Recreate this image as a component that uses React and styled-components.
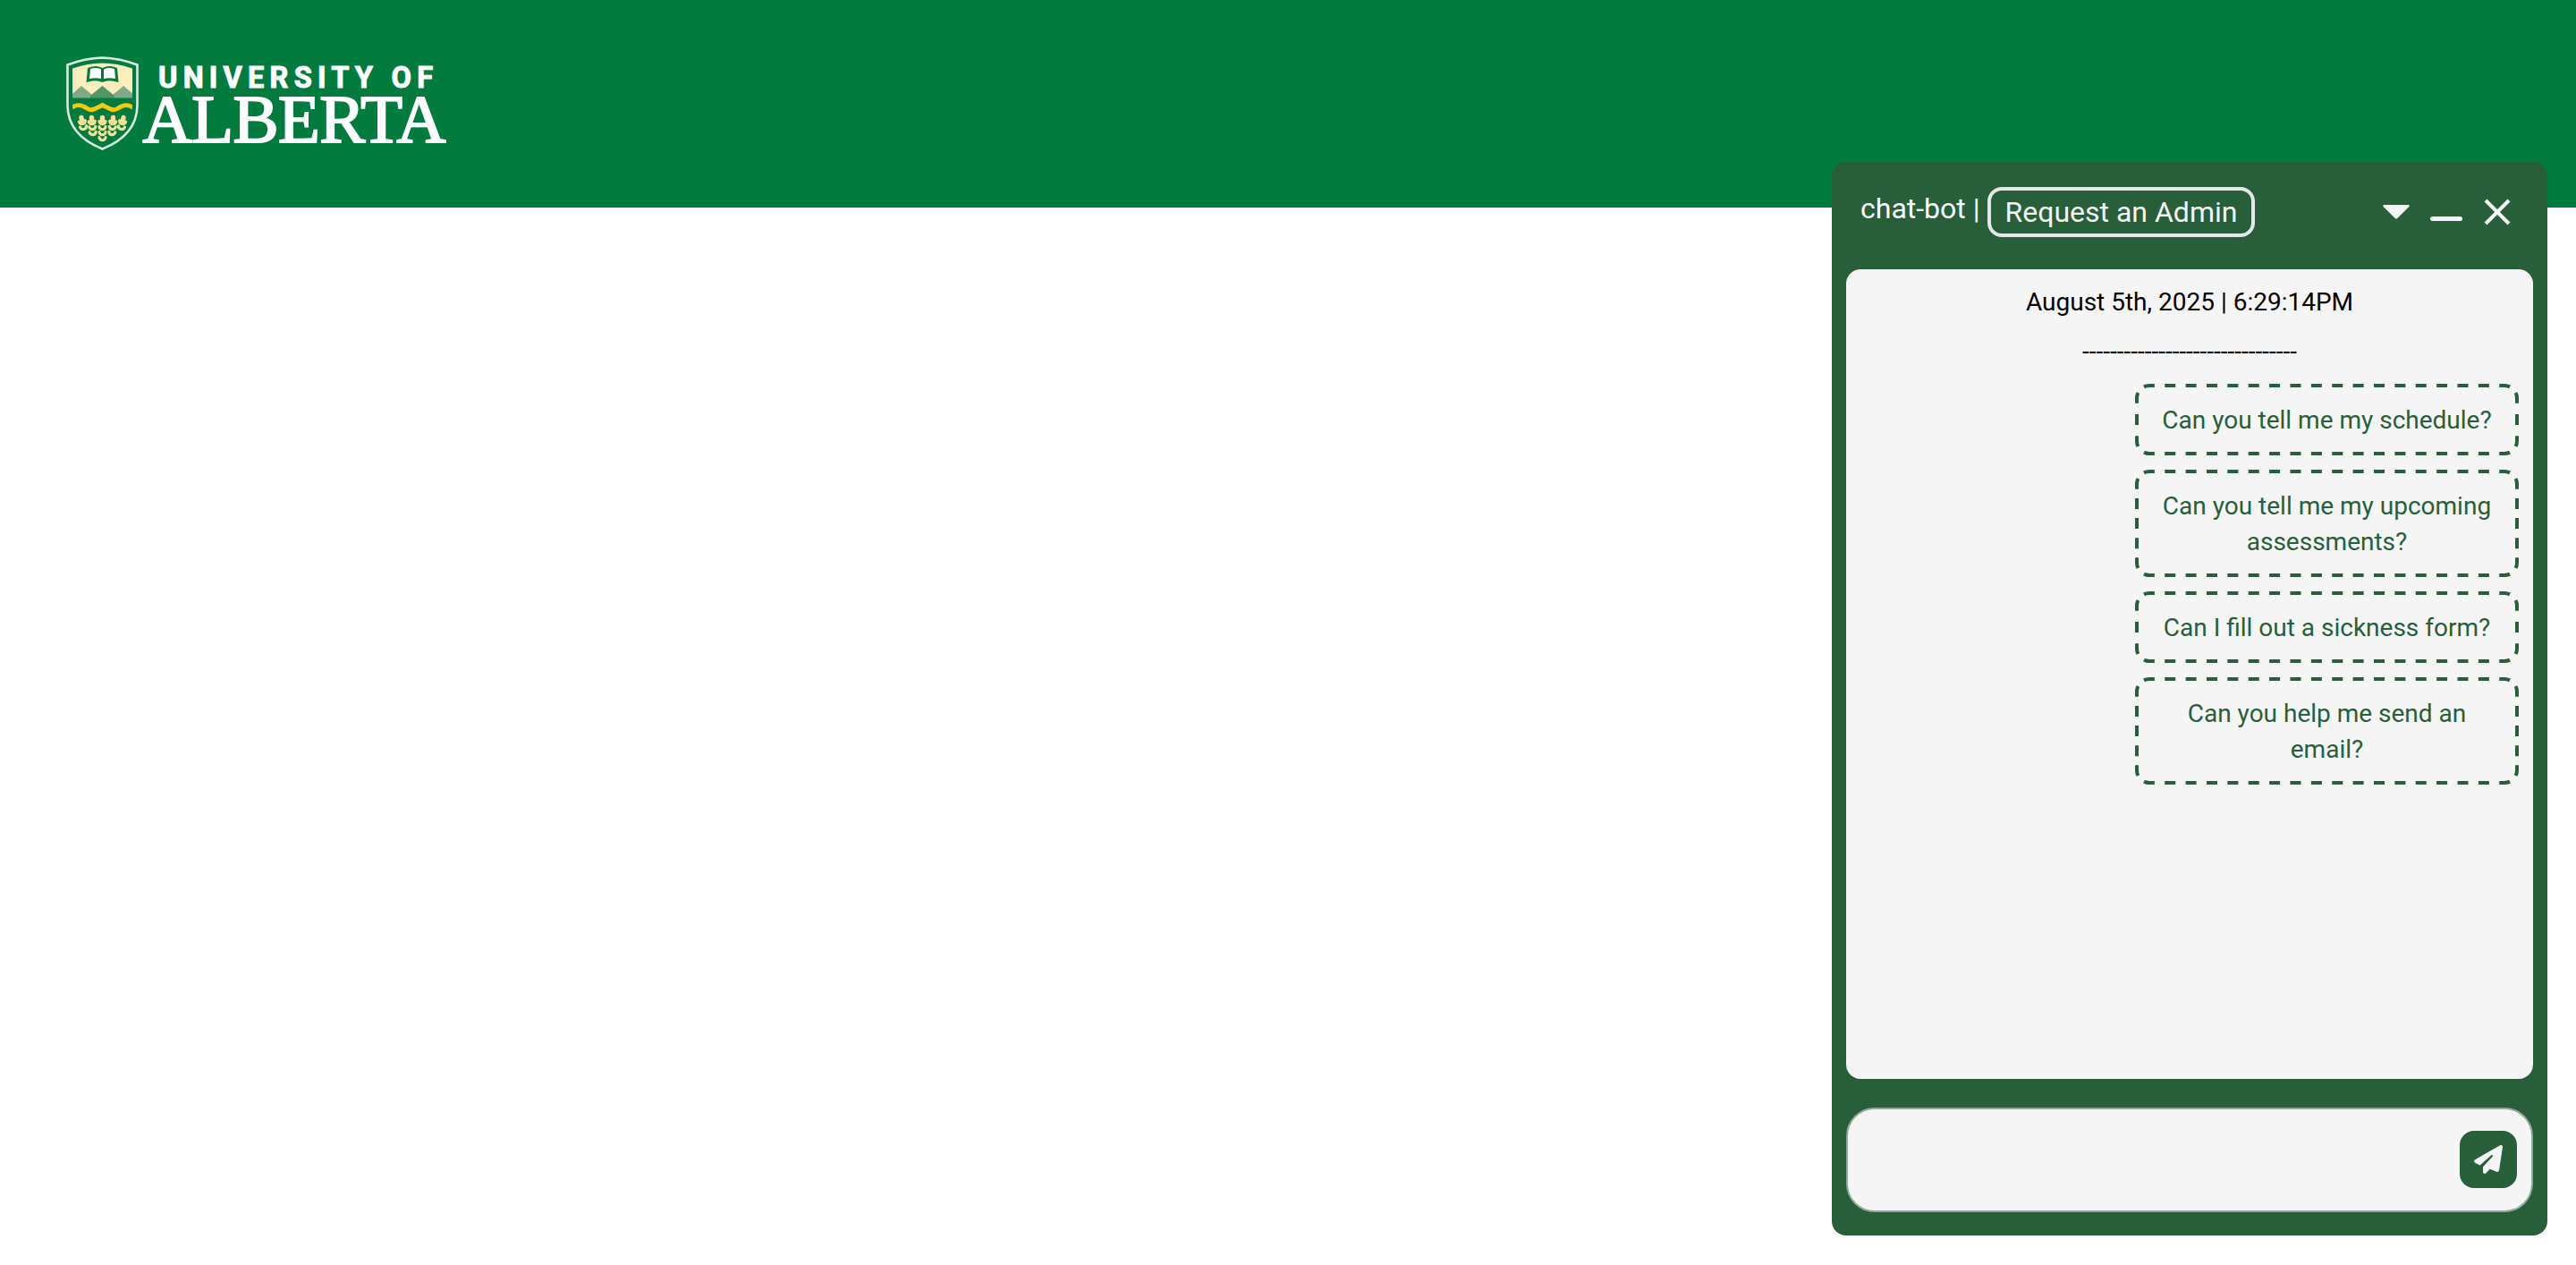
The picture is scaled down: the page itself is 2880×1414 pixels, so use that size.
import React from "react";
import styled, { createGlobalStyle } from "styled-components";
import { FaPaperPlane } from "react-icons/fa6";

const GlobalStyle = createGlobalStyle`
  *, *::before, *::after { box-sizing: border-box; }
  body {
    margin: 0;
    background: #fff;
    font-family: Roboto, "Liberation Sans", sans-serif;
  }
  button, input { font: inherit; margin: 0; }
`;

const Page = styled.div`
  height: 1414px;
  overflow: hidden;
`;

const Banner = styled.header`
  display: flex;
  align-items: center;
  height: 232px;
  padding: 0 64px;
  background: #037b3f;
`;

const LogoSvg = styled.svg`
  overflow: visible;
`;

const ChatWindow = styled.section`
  position: fixed;
  right: 32px;
  bottom: 33px;
  display: flex;
  flex-direction: column;
  width: 800px;
  height: 1200px;
  padding: 0 16px 26px;
  border-radius: 16px;
  background: #285e39;
`;

const ChatHeader = styled.div`
  display: flex;
  align-items: flex-start;
  justify-content: space-between;
  height: 120px;
  padding: 28px 8px 0 16px;
`;

const TitleGroup = styled.div`
  display: flex;
  align-items: flex-start;
  gap: 8px;
  font-size: 32px;
  line-height: 48px;
  color: #fff;
`;

const AdminButton = styled.button`
  height: 56px;
  padding: 0 16px;
  border: 4px solid #e5e7eb;
  border-radius: 16px;
  background: transparent;
  color: #f5f5f5;
  line-height: 48px;
`;

const Controls = styled.div`
  display: flex;
  height: 56px;
`;

const IconButton = styled.button`
  display: flex;
  align-items: center;
  justify-content: center;
  width: ${(p) => p.$width}px;
  height: 56px;
  padding: 0;
  border: 0;
  border-radius: 16px;
  background: transparent;
  color: #f5f5f5;
`;

const Messages = styled.div`
  display: flex;
  flex-direction: column;
  align-items: center;
  gap: 16px;
  height: 905px;
  padding: 16px;
  border-radius: 16px;
  background: #f5f5f5;
  font-size: 28px;
  line-height: 40px;
  color: #000;
`;

const Stamp = styled.div`
  height: 40px;
  padding-top: 1px;
  text-align: center;
`;

const Divider = styled.div`
  height: 40px;
  text-align: center;
`;

const Suggestion = styled.button`
  position: relative;
  align-self: flex-end;
  width: 429px;
  padding: 21px 28px 19px;
  border: 0;
  border-radius: 16px;
  background: transparent;
  color: #285e39;
  line-height: 40px;
  text-align: center;
`;

const Outline = styled.svg`
  position: absolute;
  inset: 0;
  fill: none;
  stroke: #285e39;
  stroke-width: 4px;
`;

const Composer = styled.form`
  display: flex;
  align-items: center;
  height: 117px;
  margin-top: 32px;
  padding: 0 16px 1px;
  border: 2px solid #91ab9b;
  border-radius: 32px;
  background: #f5f5f5;
`;

const MessageInput = styled.input`
  flex: 1;
  height: 64px;
  padding: 0 16px;
  border: 0;
  outline: 0;
  background: transparent;
  font-size: 28px;
`;

const SendButton = styled.button`
  display: flex;
  align-items: center;
  justify-content: center;
  width: 64px;
  height: 64px;
  padding: 0;
  border: 0;
  border-radius: 16px;
  background: #285e39;
  color: #f5f5f5;
`;

const suggestions = [
  { text: "Can you tell me my schedule?", lines: 1 },
  { text: "Can you tell me my upcoming assessments?", lines: 2 },
  { text: "Can I fill out a sickness form?", lines: 1 },
  { text: "Can you help me send an email?", lines: 2 },
];

const SHIELD = "M75.5 72.5 Q95 65 114.5 64.5 Q134 65 153.5 72.5 V118 Q153 151 114.5 166.5 Q76 151 75.5 118 Z";
const FIELD = "M81 76.500 Q98 70.500 114.500 70.500 Q131 70.500 148 76.500 V118 Q147 147 114.500 160.500 Q82 147 81 118 Z";

/* Each side carries a whole number of 12px dashes, ending on the corner curves. */
function DashedOutline({ width, height }) {
  const dashes = (side) => {
    const length = side - 19.6;
    const count = Math.round((length - 12) / 23.4);
    return `12 ${(length - 12) / count - 12}`;
  };
  const r = width;
  const b = height;
  const horizontal = dashes(width);
  const vertical = dashes(height);
  return (
    <Outline width={width} height={height} aria-hidden="true">
      <path strokeDasharray={horizontal} d={`M10 3.35A14 14 0 0 1 16 2H${r - 16}A14 14 0 0 1 ${r - 10} 3.35`} />
      <path strokeDasharray={horizontal} d={`M10 ${b - 3.35}A14 14 0 0 0 16 ${b - 2}H${r - 16}A14 14 0 0 0 ${r - 10} ${b - 3.35}`} />
      <path strokeDasharray={vertical} d={`M3.35 10A14 14 0 0 0 2 16V${b - 16}A14 14 0 0 0 3.35 ${b - 10}`} />
      <path strokeDasharray={vertical} d={`M${r - 3.35} 10A14 14 0 0 1 ${r - 2} 16V${b - 16}A14 14 0 0 1 ${r - 3.35} ${b - 10}`} />
    </Outline>
  );
}

function Ear({ x, y = 131.5, rows, lean = 0 }) {
  return (
    <g stroke="#f6e093" fill="none" strokeLinecap="round" transform={`rotate(${lean} ${x} ${y})`}>
      <path d={`M${x} ${y}v3`} strokeWidth="5.400" />
      {Array.from({ length: rows }, (_, i) => (
        <path
          key={i}
          d={`M${x - 3.6} ${y + 4 + i * 6}q.6 3.200 3.600 3.200q3 0 3.600 -3.200`}
          strokeWidth="3.100"
        />
      ))}
    </g>
  );
}

function Logo() {
  return (
    <LogoSvg width="440" height="116" viewBox="64 58 440 116" role="img" aria-label="University of Alberta">
      <defs>
        <clipPath id="field"><path d={FIELD} /></clipPath>
      </defs>
      <path d={SHIELD} fill="#037b3f" stroke="#d6eee0" strokeWidth="2.600" />
      <g clipPath="url(#field)">
        <rect x="80" y="68" width="70" height="38" fill="#fcedbd" />
        <path d="M80 106 L91 96 L103 106 L114.500 96 L126 106 L138 96 L150 106 V112 H80Z" fill="#7fa987" />
        <path d="M101 107 L114.500 96 L128 107 V112 H101Z" fill="#559669" />
        <rect x="80" y="109.500" width="70" height="52" fill="#037b3f" />
        <path d="M80 120.500 C86 116 91 117 97 121 C103 125 107 121 114.500 117.500 C122 121 126 125 132 121 C138 117 143 116 149 120.500" fill="none" stroke="#f2cb12" strokeWidth="5" />
      </g>
      <path d="M98 76 Q107 72 114.500 76 Q122 72 131 76 L132.500 92 Q121 88.500 114.500 92 Q107 88.500 96.500 92Z" fill="#037b3f" />
      <path d="M101 77 Q108 75 113 77.500 V88 Q107 86.500 100 88Z M116 77.500 Q121 75 128 77 L129 88 Q122 86.500 116 88Z" fill="#fff" />
      <Ear x={91} rows={2} lean={-12} />
      <Ear x={102.5} rows={3} lean={-4} />
      <Ear x={114.5} rows={4} />
      <Ear x={126.5} rows={3} lean={4} />
      <Ear x={138} rows={2} lean={12} />
      <g fill="#fff" stroke="#fff">
        <text x="177" y="97.500" fontFamily="Roboto, sans-serif" fontWeight="700" fontSize="32.500" strokeWidth="1" textLength="307" lengthAdjust="spacing">
          UNIVERSITY OF
        </text>
        <text x="159.500" y="159" fontFamily="'Liberation Serif', serif" fontSize="76.500" strokeWidth="2" textLength="339" lengthAdjust="spacing">
          ALBERTA
        </text>
      </g>
    </LogoSvg>
  );
}

export default function App() {
  return (
    <Page>
      <GlobalStyle />
      <Banner>
        <Logo />
      </Banner>
      <ChatWindow>
        <ChatHeader>
          <TitleGroup>
            <span>chat-bot |</span>
            <AdminButton type="button">Request an Admin</AdminButton>
          </TitleGroup>
          <Controls>
            <IconButton type="button" $width={62} aria-label="Menu">
              <svg width="32" height="32" viewBox="0 0 32 32">
                <path d="M2 8h28q1.500 .8 .4 2L17 23.200q-1 .8-2 0L1.600 10Q.5 8.800 2 8Z" fill="currentColor" />
              </svg>
            </IconButton>
            <IconButton type="button" $width={50} aria-label="Minimize">
              <svg width="36" height="36" viewBox="0 0 36 36">
                <rect x="0" y="23" width="36" height="5" rx="2.500" fill="currentColor" />
              </svg>
            </IconButton>
            <IconButton type="button" $width={64} aria-label="Close">
              <svg width="32" height="32" viewBox="0 0 32 32" fill="none" stroke="currentColor" strokeWidth="4">
                <path d="M3 3l26 26M29 3L3 29" />
              </svg>
            </IconButton>
          </Controls>
        </ChatHeader>
        <Messages>
          <Stamp>August 5th, 2025 | 6:29:14PM</Stamp>
          <Divider>-------------------------------</Divider>
          {suggestions.map(({ text, lines }) => (
            <Suggestion type="button" key={text}>
              <DashedOutline width={429} height={40 + lines * 40} />
              {text}
            </Suggestion>
          ))}
        </Messages>
        <Composer>
          <MessageInput aria-label="Message" />
          <SendButton type="button" aria-label="Send">
            <FaPaperPlane size={32} />
          </SendButton>
        </Composer>
      </ChatWindow>
    </Page>
  );
}
